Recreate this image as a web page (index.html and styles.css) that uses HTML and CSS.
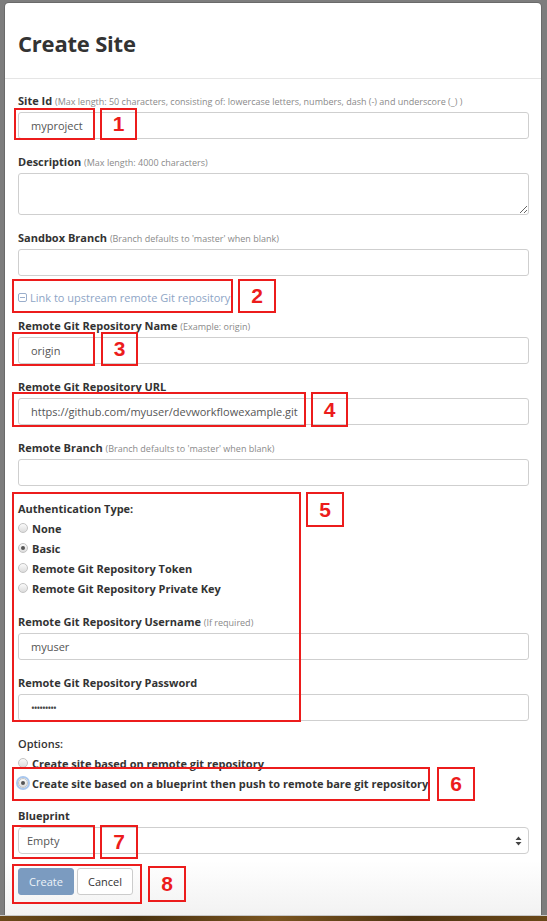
FILE: index.html
```html
<!DOCTYPE html>
<html>
<head>
<meta charset="utf-8">
<link rel="stylesheet" href="styles.css">
</head>
<body>
<div class="screen">
  <div class="modal">
    <div class="modal-header"><h1>Create Site</h1></div>
    <div class="modal-body">
      <div class="group">
        <label>Site Id <small>(Max length: 50 characters, consisting of: lowercase letters, numbers, dash (-) and underscore (_) )</small></label>
        <input class="field" type="text" value="myproject">
      </div>
      <div class="group">
        <label>Description <small>(Max length: 4000 characters)</small></label>
        <textarea class="field area"></textarea>
      </div>
      <div class="group">
        <label>Sandbox Branch <small>(Branch defaults to 'master' when blank)</small></label>
        <input class="field" type="text" value="">
      </div>
      <div class="toggle">
        <svg class="minus" width="9" height="9" viewBox="0 0 9 9"><rect x="0.5" y="0.5" width="8" height="8" rx="1.5" fill="none" stroke="currentColor"/><line x1="2" y1="4.5" x2="7" y2="4.5" stroke="currentColor"/></svg>
        <span>Link to upstream remote Git repository</span>
      </div>
      <div class="group">
        <label>Remote Git Repository Name <small>(Example: origin)</small></label>
        <input class="field" type="text" value="origin">
      </div>
      <div class="group">
        <label>Remote Git Repository URL</label>
        <input class="field" type="text" value="https://github.com/myuser/devworkflowexample.git">
      </div>
      <div class="group">
        <label>Remote Branch <small>(Branch defaults to 'master' when blank)</small></label>
        <input class="field" type="text" value="">
      </div>
      <div class="radios">
        <label>Authentication Type:</label>
        <div class="radio"><span class="dot"></span>None</div>
        <div class="radio"><span class="dot on"></span>Basic</div>
        <div class="radio"><span class="dot"></span>Remote Git Repository Token</div>
        <div class="radio"><span class="dot"></span>Remote Git Repository Private Key</div>
      </div>
      <div class="group">
        <label>Remote Git Repository Username <small>(If required)</small></label>
        <input class="field" type="text" value="myuser">
      </div>
      <div class="group">
        <label>Remote Git Repository Password</label>
        <input class="field pw" type="text" value="•••••••••">
      </div>
      <div class="radios opts">
        <label class="plain">Options:</label>
        <div class="radio"><span class="dot"></span>Create site based on remote git repository</div>
        <div class="radio"><span class="dot on focus"></span>Create site based on a blueprint then push to remote bare git repository</div>
      </div>
      <div class="group">
        <label>Blueprint</label>
        <div class="select">
          <span>Empty</span>
          <svg width="7" height="10" viewBox="0 0 7 10"><path d="M3.5 0.5 L6.5 4 H0.5 Z M3.5 9.5 L6.5 6 H0.5 Z" fill="#444"/></svg>
        </div>
      </div>
      <div class="buttons">
        <button class="btn primary">Create</button>
        <button class="btn">Cancel</button>
      </div>
    </div>
  </div>
  <div class="strip"></div>

  <div class="annot">
    <div class="box" style="left:14px;top:108px;width:81px;height:32px"></div>
    <div class="box num" style="left:100px;top:108px;width:37px;height:32px">1</div>
    <div class="box" style="left:12px;top:279px;width:221px;height:34px"></div>
    <div class="box num" style="left:238px;top:279px;width:38px;height:34px">2</div>
    <div class="box" style="left:12px;top:332px;width:83px;height:34px"></div>
    <div class="box num" style="left:101px;top:332px;width:37px;height:34px">3</div>
    <div class="box" style="left:12px;top:392px;width:294px;height:35px"></div>
    <div class="box num" style="left:311px;top:392px;width:37px;height:35px">4</div>
    <div class="box" style="left:12px;top:492px;width:289px;height:230px"></div>
    <div class="box num" style="left:306px;top:492px;width:38px;height:35px">5</div>
    <div class="box" style="left:12px;top:767px;width:418px;height:34px"></div>
    <div class="box num" style="left:437px;top:767px;width:38px;height:34px">6</div>
    <div class="box" style="left:12px;top:825px;width:83px;height:34px"></div>
    <div class="box num" style="left:100px;top:825px;width:38px;height:34px">7</div>
    <div class="box" style="left:12px;top:864px;width:130px;height:40px"></div>
    <div class="box num" style="left:148px;top:866px;width:38px;height:36px">8</div>
  </div>
</div>
</body>
</html>
```
FILE: styles.css
```css
* { box-sizing: border-box; }
html, body { margin: 0; padding: 0; }
body {
  width: 547px;
  height: 921px;
  overflow: hidden;
  background: #7d7d7d;
  font-family: "Open Sans", "Liberation Sans", sans-serif;
  color: #333;
}
.screen {
  position: relative;
  width: 547px;
  height: 921px;
  padding-top: 3px;
  display: flex;
  flex-direction: column;
}
.modal {
  margin-left: 5px;
  width: 536px;
  height: 912px;
  background: linear-gradient(#fff 0, #fff 94%, #f2f2f2 100%);
  border-radius: 4px 4px 0 0;
  box-shadow: 0 0 0 1px rgba(0,0,0,0.15);
}
.modal-header {
  height: 76px;
  border-bottom: 1px solid #e5e5e5;
  padding: 4px 13px 0;
  display: flex;
  align-items: center;
}
.modal-header h1 {
  margin: 0;
  font-size: 22px;
  font-weight: 700;
  color: #333;
  letter-spacing: -0.2px;
}
.modal-body {
  padding: 14px 12px 0 13px;
}
label {
  display: block;
  height: 15px;
  font-size: 11px;
  line-height: 15px;
  font-weight: 700;
  color: #333;
  margin-bottom: 4px;
  white-space: nowrap;
}
label small {
  font-size: 9px;
  line-height: 1;
  font-weight: 400;
  color: #8a8a8a;
}
.group { margin-bottom: 15px; }
.field {
  display: block;
  margin: 0;
  width: 100%;
  height: 27px;
  border: 1px solid #cfcfcf;
  border-radius: 3px;
  padding: 0 12px;
  font-family: "Open Sans", "Liberation Sans", sans-serif;
  font-size: 11px;
  color: #555;
  background: #fff;
  outline: none;
}
.field.area { height: 42px; resize: vertical; }
.field.pw { font-size: 10px; letter-spacing: -1px; color: #444; }
.toggle {
  display: flex;
  align-items: center;
  gap: 3px;
  height: 16px;
  margin-top: -2px;
  margin-bottom: 13px;
  font-size: 11px;
  color: #8ea5c6;
}
.minus { flex: none; color: #9aaecb; }
.radios { margin-bottom: 16px; }
.radios label { margin-bottom: 2px; }
.radios.opts { margin-bottom: 15px; }
.radios label.plain { font-weight: 600; }
.radio {
  display: flex;
  align-items: center;
  height: 20px;
  font-size: 11px;
  font-weight: 700;
  color: #333;
  white-space: nowrap;
}
.dot {
  flex: none;
  width: 10px;
  height: 10px;
  margin-right: 4px;
  border-radius: 50%;
  border: 1px solid #c3c3c3;
  background: linear-gradient(#fafafa, #dcdcdc);
  display: flex;
  align-items: center;
  justify-content: center;
}
.dot.on::after {
  content: "";
  width: 4px;
  height: 4px;
  border-radius: 50%;
  background: #555;
}
.dot.focus { box-shadow: 0 0 0 2px #a9c7ee; }
.select {
  height: 27px;
  border: 1px solid #cfcfcf;
  border-radius: 4px;
  padding: 0 6px 0 8px;
  display: flex;
  align-items: center;
  justify-content: space-between;
  font-size: 11px;
  color: #555;
  background: #fff;
}
.buttons {
  display: flex;
  gap: 3px;
  margin-top: -1px;
}
.btn {
  height: 27px;
  width: 56px;
  border-radius: 3px;
  border: 1px solid #ccc;
  background: #fff;
  font-family: "Open Sans", "Liberation Sans", sans-serif;
  font-size: 11px;
  color: #333;
  padding: 0;
}
.btn.primary {
  background: #7b9bc0;
  border-color: #7b9bc0;
  color: #eef3f8;
}
.strip {
  flex: none;
  height: 6px;
  margin-top: auto;
  background: linear-gradient(90deg, #6b4a1a 0%, #4a3210 25%, #7a5520 50%, #4f3512 75%, #6a4818 100%);
  border-top: 1px solid #c9c9c9;
}
.annot { position: absolute; left: 0; top: 0; width: 0; height: 0; }
.box {
  position: absolute;
  border: 2px solid #ec1c1c;
}
.num {
  display: flex;
  align-items: center;
  justify-content: center;
  font-family: "Liberation Sans", Arial, sans-serif;
  font-weight: 700;
  font-size: 21px;
  color: #ec1c1c;
}
```
